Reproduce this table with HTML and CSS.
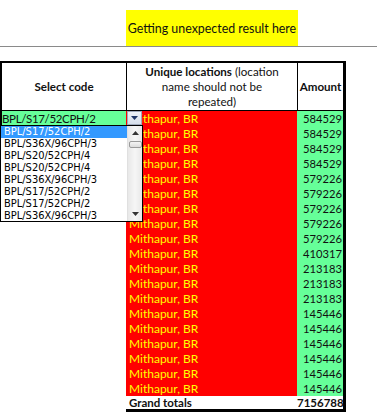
FILE: index.html
```html
<!DOCTYPE html>
<html>
<head>
<meta charset="utf-8">
<link rel="stylesheet" href="styles.css">
</head>
<body>
<div class="top"><div class="note">Getting unexpected result here</div></div>
<div class="rule"></div>
<div class="sheet">
  <div class="h h-code">Select code</div>
  <div class="h h-loc"><span><b>Unique locations</b> (location<br>name should not be<br>repeated)</span></div>
  <div class="h h-amt">Amount</div>

  <div class="c code">BPL/S17/52CPH/2</div><div class="c loc">Mithapur, BR</div><div class="c amt">584529</div>
  <div class="c"></div><div class="c loc">Mithapur, BR</div><div class="c amt">584529</div>
  <div class="c"></div><div class="c loc">Mithapur, BR</div><div class="c amt">584529</div>
  <div class="c"></div><div class="c loc">Mithapur, BR</div><div class="c amt">584529</div>
  <div class="c"></div><div class="c loc">Mithapur, BR</div><div class="c amt">579226</div>
  <div class="c"></div><div class="c loc">Mithapur, BR</div><div class="c amt">579226</div>
  <div class="c"></div><div class="c loc">Mithapur, BR</div><div class="c amt">579226</div>
  <div class="c"></div><div class="c loc">Mithapur, BR</div><div class="c amt">579226</div>
  <div class="c"></div><div class="c loc">Mithapur, BR</div><div class="c amt">579226</div>
  <div class="c"></div><div class="c loc">Mithapur, BR</div><div class="c amt">410317</div>
  <div class="c"></div><div class="c loc">Mithapur, BR</div><div class="c amt">213183</div>
  <div class="c"></div><div class="c loc">Mithapur, BR</div><div class="c amt">213183</div>
  <div class="c"></div><div class="c loc">Mithapur, BR</div><div class="c amt">213183</div>
  <div class="c"></div><div class="c loc">Mithapur, BR</div><div class="c amt">145446</div>
  <div class="c"></div><div class="c loc">Mithapur, BR</div><div class="c amt">145446</div>
  <div class="c"></div><div class="c loc">Mithapur, BR</div><div class="c amt">145446</div>
  <div class="c"></div><div class="c loc">Mithapur, BR</div><div class="c amt">145446</div>
  <div class="c"></div><div class="c loc">Mithapur, BR</div><div class="c amt">145446</div>
  <div class="c"></div><div class="c loc">Mithapur, BR</div><div class="c amt">145446</div>

  <div class="g"></div><div class="g gl">Grand totals</div><div class="g ga">7156788</div>

  <div class="dd"><svg width="7" height="4" viewBox="0 0 7 4"><path d="M0 0h7L3.5 4z" fill="#1f3566"/></svg></div>
  <div class="list">
    <div class="items">
      <div class="item sel">BPL/S17/52CPH/2</div>
      <div class="item">BPL/S36X/96CPH/3</div>
      <div class="item">BPL/S20/52CPH/4</div>
      <div class="item">BPL/S20/52CPH/4</div>
      <div class="item">BPL/S36X/96CPH/3</div>
      <div class="item">BPL/S17/52CPH/2</div>
      <div class="item">BPL/S17/52CPH/2</div>
      <div class="item">BPL/S36X/96CPH/3</div>
    </div>
    <div class="scroll">
      <div class="arr"><svg width="7" height="4" viewBox="0 0 7 4"><path d="M3.5 0L7 4H0z" fill="#333"/></svg></div>
      <div class="thumb"></div>
      <div class="track"></div>
      <div class="arr"><svg width="7" height="4" viewBox="0 0 7 4"><path d="M0 0h7L3.5 4z" fill="#333"/></svg></div>
    </div>
  </div>
</div>
</body>
</html>
```
FILE: styles.css
```css
* { box-sizing: border-box; }
body {
  margin: 0;
  width: 377px;
  height: 415px;
  overflow: hidden;
  background: #fff;
  font-family: Lato, "Open Sans", sans-serif;
  color: #111;
}
.top { height: 46px; display: flex; }
.note {
  margin: 10px 0 0 126px;
  width: 172px;
  height: 36px;
  background: #ffff00;
  display: flex;
  align-items: center;
  justify-content: center;
  font-size: 12.4px;
}
.rule { height: 1px; background: #8a8a8a; }
.sheet {
  position: relative;
  margin-top: 14px;
  width: 346px;
  display: grid;
  grid-template-columns: 126px 171px 49px;
  font-size: 11px;
}
.h {
  height: 50px;
  border-top: 2px solid #000;
  border-bottom: 1px solid #000;
  display: flex;
  align-items: center;
  justify-content: center;
  text-align: center;
  line-height: 15px;
  font-size: 11.6px;
}
.h-code { border-left: 2px solid #000; font-weight: bold; }
.h-loc { border-left: 1px solid #000; }
.h-amt { border-left: 1px solid #000; border-right: 3px solid #000; font-weight: bold; }
.c {
  height: 15px;
  line-height: 15px;
  white-space: nowrap;
  overflow: hidden;
}
.code {
  background: #66ff99;
  border-left: 2px solid #000;
  padding-left: 0;
  font-size: 11.5px;
  letter-spacing: -0.35px;
}
.loc { background: #ff0000; color: #ffff00; padding-left: 3px; font-size: 12px; }
.amt {
  background: #66ff99;
  text-align: right;
  padding-right: 1px;
  border-right: 3px solid #000;
  font-size: 11.2px;
}
.g { height: 16px; line-height: 13px; white-space: nowrap; font-size: 11.5px; }
.gl { border-bottom: 3px solid #000; font-weight: bold; padding-left: 3px; }
.ga { border-bottom: 3px solid #000; border-right: 3px solid #000; font-weight: bold; text-align: right; padding-right: 1px; }
.dd {
  position: absolute;
  left: 127px;
  top: 50px;
  width: 15px;
  height: 14px;
  border: 1px solid #9fa9ba;
  background: linear-gradient(#eef2f8, #d6deea);
  display: flex;
  align-items: center;
  justify-content: center;
}
.list {
  position: absolute;
  left: 0;
  top: 64px;
  width: 143px;
  height: 97px;
  border: 1px solid #000;
  background: #fff;
  display: flex;
  font-family: "DejaVu Sans Condensed", "DejaVu Sans", sans-serif;
  font-size: 11px;
  color: #000;
}
.items { width: 126px; }
.item { height: 12px; line-height: 12px; padding-left: 3px; white-space: nowrap; }
.sel { background: #3399ff; color: #fff; }
.scroll {
  width: 15px;
  background: linear-gradient(90deg, #e8e8e8, #f6f6f6 50%, #e8e8e8);
  border-left: 1px solid #e0e0e0;
  display: flex;
  flex-direction: column;
  align-items: center;
}
.arr { height: 14px; display: flex; align-items: center; justify-content: center; }
.thumb {
  width: 13px;
  height: 7px;
  margin-top: 1px;
  border: 1px solid #9a9a9a;
  border-radius: 2px;
  background: linear-gradient(#f4f4f4, #dcdcdc);
}
.track { flex: 1; }
```
